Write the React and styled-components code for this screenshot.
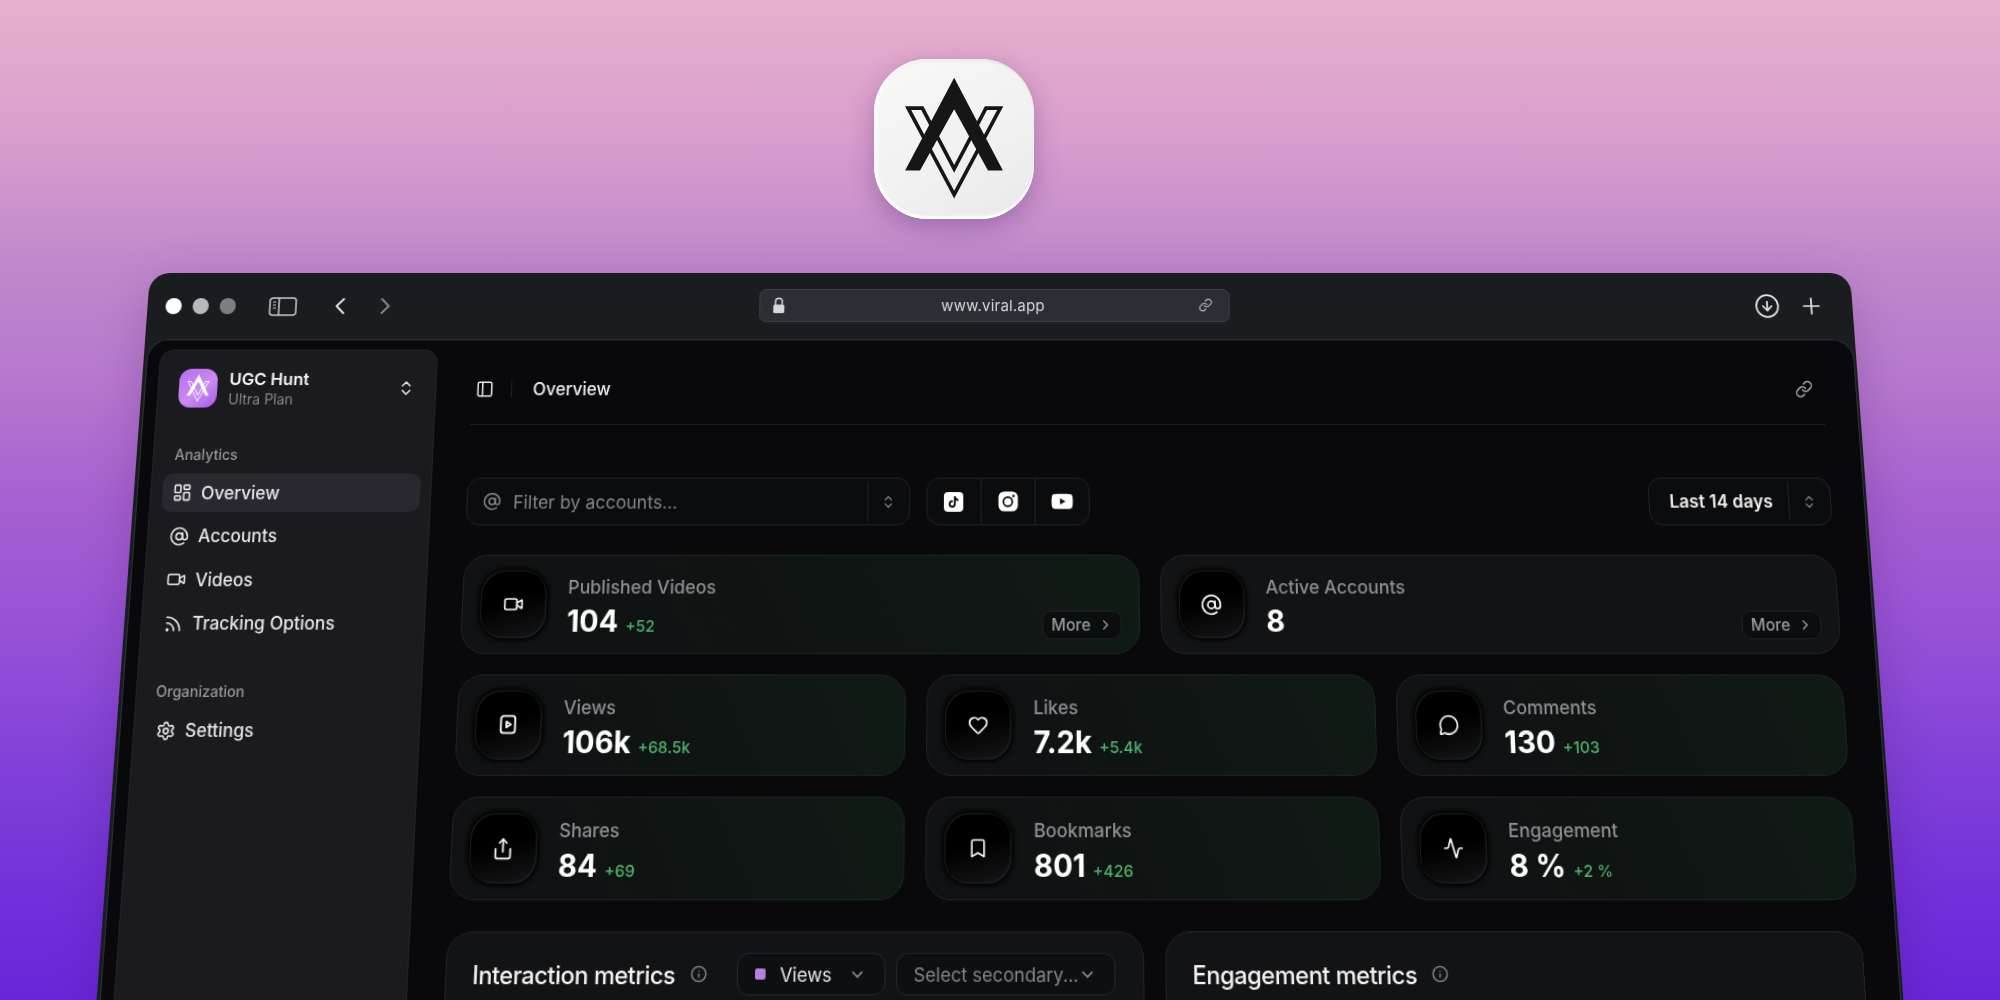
import styled, { createGlobalStyle } from "styled-components";
import {
    Activity, AtSign, Bookmark, ChevronDown, ChevronLeft, ChevronRight, ChevronsUpDown, CircleArrowDown, Heart,
    Info, LayoutDashboard, Link, MessageCircle, PanelLeft, Plus, Rss, Settings, Share, Video,
} from "lucide-react";
import { FaTiktok, FaYoutube } from "react-icons/fa";

// the window leans back: its top edge is 1700px wide and it widens towards the bottom of the page
const WINDOW_WIDTH = 1700;
const LEAN = 8.64e-5;
const tilt = `matrix3d(1,0,0,0, ${-(WINDOW_WIDTH / 2) * LEAN},1,0,${-LEAN}, 0,0,1,0, 0,0,0,1)`;

const topStats = [
    { icon: <Video size={20} />, label: "Published Videos", value: "104", delta: "+52", tint: true },
    { icon: <AtSign size={21} />, label: "Active Accounts", value: "8" },
];

const gridStats = [
    { icon: <ViewsIcon />, label: "Views", value: "106k", delta: "+68.5k", tint: true },
    { icon: <Heart size={20} />, label: "Likes", value: "7.2k", delta: "+5.4k", tint: true },
    { icon: <MessageCircle size={20} />, label: "Comments", value: "130", delta: "+103", tint: true },
    { icon: <Share size={21} />, label: "Shares", value: "84", delta: "+69", tint: true },
    { icon: <Bookmark size={20} />, label: "Bookmarks", value: "801", delta: "+426", tint: true },
    { icon: <Activity size={20} />, label: "Engagement", value: "8 %", delta: "+2 %", tint: true },
];

function ViewsIcon() {
    return (
        <svg width="21" height="21" viewBox="0 0 20 20" fill="none" stroke="currentColor" strokeWidth="1.8" strokeLinejoin="round">
            <rect x="3.5" y="2.5" width="13" height="15" rx="2.5" />
            <path d="M8.5 7.5 L12.5 10 L8.5 12.5 Z" />
        </svg>
    );
}

function SafariSidebarIcon() {
    return (
        <svg width="28" height="19" viewBox="0 0 28 19" fill="none" stroke="#c9cbcd" strokeWidth="1.5">
            <rect x="1" y="1" width="26" height="17" rx="3" />
            <path d="M10 1 V18" />
            <path d="M4 5 H7 M4 8 H7 M4 11 H7" strokeWidth="1.2" />
        </svg>
    );
}

function LockIcon() {
    return (
        <svg width="13" height="17" viewBox="0 0 13 17">
            <path d="M3.2 8 V4.6 a3.3 3.3 0 0 1 6.6 0 V8" fill="none" stroke="#d8d9da" strokeWidth="1.5" />
            <rect x="1" y="7.5" width="11" height="8.5" rx="1.6" fill="#d8d9da" />
        </svg>
    );
}

function InstagramTile() {
    return (
        <svg width="20" height="20" viewBox="0 0 20 20">
            <rect x="0.5" y="0.5" width="19" height="19" rx="5.5" fill="#ffffff" />
            <circle cx="9.7" cy="10.3" r="4.4" fill="none" stroke="#0a0b0d" strokeWidth="1.7" />
            <circle cx="15.2" cy="4.8" r="1.2" fill="#0a0b0d" />
        </svg>
    );
}

function Mark({ color }) {
    return (
        <svg viewBox="245 135 315 380" width="100%" height="100%">
            <path
                d="M264 235 L403 496 L542 235 L499 235 L403 418 L307 235 Z"
                fill="none"
                stroke={color}
                strokeWidth="11"
                strokeLinejoin="miter"
            />
            <path d="M403 143 L550 423 L505 423 L403 238 L300 423 L255 423 Z" fill={color} />
        </svg>
    );
}

function StatCard({ icon, label, value, delta, tint, more }) {
    return (
        <Card $tint={tint}>
            <Tile>{icon}</Tile>
            <StatText>
                <StatLabel>{label}</StatLabel>
                <StatLine>
                    <StatValue>{value}</StatValue>
                    {delta && <StatDelta>{delta}</StatDelta>}
                </StatLine>
            </StatText>
            {more && <MoreButton>More <ChevronRight size={15} /></MoreButton>}
        </Card>
    );
}

export default function App() {
    return (
        <Page>
            <GlobalStyle />
            <AppIcon><Mark color="#161616" /></AppIcon>
            <BrowserWindow>
                <Toolbar>
                    <ToolbarLeft>
                        <Dot $shade="#ffffff" />
                        <Dot $shade="#b9bbbb" />
                        <Dot $shade="#7d7f80" />
                        <SidebarToggle><SafariSidebarIcon /></SidebarToggle>
                        <NavButton><ChevronLeft size={28} strokeWidth={1.7} color="#e4e5e6" /></NavButton>
                        <NavButton><ChevronRight size={28} strokeWidth={1.7} color="#85888a" /></NavButton>
                    </ToolbarLeft>
                    <UrlBar>
                        <LockIcon />
                        <UrlText>www.viral.app</UrlText>
                        <Link size={14} color="#b4b6b8" />
                    </UrlBar>
                    <ToolbarRight>
                        <CircleArrowDown size={26} strokeWidth={1.6} color="#e4e5e6" />
                        <Plus size={26} strokeWidth={1.6} color="#e4e5e6" />
                    </ToolbarRight>
                </Toolbar>
                <Panel>
                    <Sidebar>
                        <Workspace>
                            <WorkspaceLogo><Mark color="#ffffff" /></WorkspaceLogo>
                            <WorkspaceText>
                                <WorkspaceName>UGC Hunt</WorkspaceName>
                                <WorkspacePlan>Ultra Plan</WorkspacePlan>
                            </WorkspaceText>
                            <ChevronsUpDown size={18} color="#e4e5e6" />
                        </Workspace>
                        <SectionLabel>Analytics</SectionLabel>
                        <NavItem $active><LayoutDashboard size={19} />Overview</NavItem>
                        <NavItem><AtSign size={19} />Accounts</NavItem>
                        <NavItem><Video size={19} />Videos</NavItem>
                        <NavItem><Rss size={19} />Tracking Options</NavItem>
                        <SectionLabel $lower>Organization</SectionLabel>
                        <NavItem><Settings size={19} />Settings</NavItem>
                    </Sidebar>
                    <Main>
                        <Header>
                            <PanelLeft size={18} color="#e4e5e6" />
                            <HeaderDivider />
                            <HeaderTitle>Overview</HeaderTitle>
                            <HeaderLink><Link size={18} color="#9b9da0" /></HeaderLink>
                        </Header>
                        <Filters>
                            <AccountFilter>
                                <AccountInput><AtSign size={18} color="#85878a" />Filter by accounts...</AccountInput>
                                <SelectArrows><ChevronsUpDown size={15} color="#85878a" /></SelectArrows>
                            </AccountFilter>
                            <SocialGroup>
                                <SocialCell><GlyphTile><FaTiktok size={11} color="#0a0b0d" /></GlyphTile></SocialCell>
                                <SocialCell><InstagramTile /></SocialCell>
                                <SocialCell><FaYoutube size={22} color="#ffffff" /></SocialCell>
                            </SocialGroup>
                            <RangeSelect>
                                <RangeLabel>Last 14 days</RangeLabel>
                                <SelectArrows><ChevronsUpDown size={15} color="#85878a" /></SelectArrows>
                            </RangeSelect>
                        </Filters>
                        <TopStats>
                            {topStats.map((stat) => <StatCard key={stat.label} {...stat} more />)}
                        </TopStats>
                        <GridStats>
                            {gridStats.map((stat) => <StatCard key={stat.label} {...stat} />)}
                        </GridStats>
                        <Charts>
                            <ChartCard>
                                <ChartHead>
                                    <ChartTitle>Interaction metrics</ChartTitle>
                                    <Info size={16} color="#85878a" />
                                    <Selects>
                                        <MetricSelect $width={140} $gap={14}>
                                            <Swatch />
                                            <SelectText>Views</SelectText>
                                            <ChevronDown size={17} color="#85878a" />
                                        </MetricSelect>
                                        <MetricSelect $width={207} $gap={0}>
                                            <SelectText $muted>Select secondary...</SelectText>
                                            <ChevronDown size={17} color="#85878a" />
                                        </MetricSelect>
                                    </Selects>
                                </ChartHead>
                            </ChartCard>
                            <ChartCard>
                                <ChartHead>
                                    <ChartTitle>Engagement metrics</ChartTitle>
                                    <Info size={16} color="#85878a" />
                                </ChartHead>
                            </ChartCard>
                        </Charts>
                    </Main>
                </Panel>
            </BrowserWindow>
        </Page>
    );
}

const GlobalStyle = createGlobalStyle`
* { box-sizing: border-box; }
body {
    margin: 0;
    font-family: Inter, "Liberation Sans", sans-serif;
    background: #6a25da;
}
`
const Page = styled.div`
width: 2000px;
height: 1000px;
overflow: hidden;
display: flex;
flex-direction: column;
align-items: center;
padding-top: 59px;
background: linear-gradient(180deg, #e6b0cc 0%, #da9fcd 13%, #c18acb 25.5%, #b678cf 38%, #a55fd1 51%, #9550d6 64%, #8240d8 76.5%, #7330da 89%, #6a25da 100%);
`
const AppIcon = styled.div`
width: 160px;
height: 160px;
flex: none;
margin-right: 92px;
display: flex;
align-items: center;
justify-content: center;
padding: 16px 0 18px;
border-radius: 54px;
background: linear-gradient(150deg, #f8f8f8 0%, #f1f1f1 55%, #e9e9e9 100%);
box-shadow: inset 0 -3px 2px #ffffff, inset 3px 0 3px #ffffff, inset 0 2px 2px #e4e4e4, 0 8px 26px rgba(70, 30, 110, 0.32);
`
const BrowserWindow = styled.div`
width: ${WINDOW_WIDTH}px;
height: 900px;
flex: none;
margin-top: 54px;
border-radius: 20px 20px 0 0;
background: #1a1d20;
box-shadow: 0 10px 50px rgba(50, 10, 70, 0.2);
transform-origin: 0 0;
transform: ${tilt};
`
const Toolbar = styled.div`
height: 66px;
display: grid;
grid-template-columns: 592px 469px 1fr;
align-items: center;
padding: 0 17.5px;
`
const ToolbarLeft = styled.div`
display: flex;
align-items: center;
gap: 11px;
`
const Dot = styled.span`
width: 16px;
height: 16px;
border-radius: 50%;
background: ${props => props.$shade};
`
const SidebarToggle = styled.div`
display: flex;
margin: 0 18px 0 22px;
`
const NavButton = styled.div`
display: flex;
margin-right: 6px;
`
const UrlBar = styled.div`
height: 33px;
margin-top: -2px;
display: flex;
align-items: center;
justify-content: space-between;
padding: 0 16px 0 12px;
border-radius: 7px;
background: #2b2e32;
border: 1px solid #3b3e42;
`
const UrlText = styled.span`
margin-left: 3px;
font-size: 15px;
letter-spacing: 0.2px;
color: #d6d7d9;
`
const ToolbarRight = styled.div`
display: flex;
justify-content: flex-end;
align-items: center;
gap: 18px;
padding-right: 11px;
`
const Panel = styled.div`
height: 834px;
margin: 0 2.5px;
display: flex;
padding: 9px 0 0 12px;
border-radius: 20px 20px 0 0;
border: 1px solid #2d3134;
border-bottom: none;
background: #09090b;
`
const Sidebar = styled.aside`
width: 276px;
flex: none;
padding: 17px 10px 0 11px;
border-radius: 14px 14px 0 0;
background: #1a1a1f;
border: 1px solid #222327;
border-bottom: none;
`
const Workspace = styled.div`
display: flex;
align-items: center;
padding: 0 10px 0 9px;
`
const WorkspaceLogo = styled.div`
width: 38px;
height: 38px;
flex: none;
padding: 5px;
border-radius: 12px;
background: linear-gradient(140deg, #b46ef0 0%, #c98bf0 55%, #a45ee8 100%);
`
const WorkspaceText = styled.div`
flex: 1;
margin-left: 12px;
`
const WorkspaceName = styled.div`
font-size: 16.5px;
line-height: 22px;
font-weight: 600;
color: #f2f2f3;
`
const WorkspacePlan = styled.div`
font-size: 14px;
line-height: 18px;
color: #85868b;
`
const SectionLabel = styled.div`
font-size: 14px;
line-height: 20px;
font-weight: 500;
color: #96979b;
padding-left: ${props => props.$lower ? "8px" : "10px"};
margin: 35px 0 8px;
`
const NavItem = styled.div`
height: 37px;
display: flex;
align-items: center;
gap: 9.5px;
padding-left: 10px;
margin-bottom: 4.6px;
border-radius: 10px;
font-size: 17px;
font-weight: 500;
color: #e6e6e8;
background: ${props => props.$active ? "#28282e" : "transparent"};
`
const Main = styled.main`
flex: 1;
min-width: 0;
padding: 4px 32px 0 35px;
`
const Header = styled.header`
height: 70px;
display: flex;
align-items: center;
margin-bottom: 51px;
padding-left: 4px;
border-bottom: 1px solid #1d1f22;
`
const HeaderDivider = styled.span`
width: 1px;
height: 18px;
margin: 0 21px 0 17px;
background: #1f2124;
`
const HeaderTitle = styled.span`
font-size: 17px;
font-weight: 500;
color: #ececee;
`
const HeaderLink = styled.span`
display: flex;
margin-left: auto;
margin-right: 10px;
`
const Filters = styled.div`
display: flex;
gap: 16px;
height: 46px;
margin-bottom: 28px;
`
const ControlBox = styled.div`
display: flex;
align-items: stretch;
height: 46px;
border-radius: 13px;
border: 1px solid #202225;
background: #0b0c0e;
`
const AccountFilter = styled(ControlBox)`
width: 435px;
`
const AccountInput = styled.div`
flex: 1;
display: flex;
align-items: center;
gap: 12px;
padding-left: 15px;
font-size: 17.4px;
color: #85878a;
`
const SelectArrows = styled.div`
width: 41px;
display: flex;
align-items: center;
justify-content: center;
border-left: 1px solid #202225;
margin: 3px 0;
`
const SocialGroup = styled(ControlBox)`
width: 160px;
`
const SocialCell = styled.div`
flex: 1;
display: flex;
align-items: center;
justify-content: center;
& + & { border-left: 1px solid #202225; }
`
const GlyphTile = styled.span`
width: 19px;
height: 19px;
display: flex;
align-items: center;
justify-content: center;
border-radius: 4px;
background: #ffffff;
`
const RangeSelect = styled(ControlBox)`
margin-left: auto;
width: 179px;
`
const RangeLabel = styled.div`
flex: 1;
display: flex;
align-items: center;
padding-left: 20px;
font-size: 17px;
font-weight: 600;
color: #eeeeef;
`
const TopStats = styled.div`
display: grid;
grid-template-columns: 1fr 1fr;
gap: 20px;
margin-bottom: 18.5px;
`
const GridStats = styled.div`
display: grid;
grid-template-columns: repeat(3, 1fr);
column-gap: 20px;
row-gap: 19.5px;
margin-bottom: 28px;
`
const Card = styled.div`
height: 94px;
display: flex;
padding: 0 17px 0 17px;
border-radius: 24px;
border: 1px solid #1f2225;
background: ${props => props.$tint
        ? "linear-gradient(65deg, #101113 0%, #0f1513 55%, #101b15 100%)"
        : "#121315"};
`
const Tile = styled.div`
width: 64px;
height: 64px;
flex: none;
align-self: center;
display: flex;
align-items: center;
justify-content: center;
border-radius: 23px;
color: #f4f4f5;
background: linear-gradient(165deg, #000000 45%, #151618 100%);
box-shadow: inset 1px 1px 1px #1c1d1f, inset -1px -1px 2px #222326, 0 0 4px 2px #000000;
`
const StatText = styled.div`
padding: 19px 0 0 21px;
`
const StatLabel = styled.div`
font-size: 17.4px;
line-height: 22px;
font-weight: 500;
color: #8e8f93;
`
const StatLine = styled.div`
display: flex;
align-items: baseline;
gap: 7px;
margin-top: 4px;
`
const StatValue = styled.span`
font-size: 28px;
line-height: 34px;
font-weight: 700;
color: #ffffff;
`
const StatDelta = styled.span`
font-size: 15px;
font-weight: 500;
color: #4fb26c;
`
const MoreButton = styled.div`
height: 27px;
width: 77px;
align-self: flex-end;
margin: 0 0 13px auto;
display: flex;
align-items: center;
justify-content: center;
gap: 7px;
padding-left: 2px;
border-radius: 9px;
border: 1px solid #1f2124;
background: #0c0d0f;
font-size: 15.5px;
font-weight: 500;
color: #9a9b9f;
`
const Charts = styled.div`
display: grid;
grid-template-columns: 1fr 1fr;
gap: 20px;
`
const ChartCard = styled.div`
height: 280px;
padding: 18px 26px 0 25px;
border-radius: 24px;
border: 1px solid #1f2225;
background: #121315;
`
const ChartHead = styled.div`
display: flex;
align-items: center;
gap: 14px;
height: 38px;
`
const ChartTitle = styled.h2`
margin: 0;
font-size: 22.2px;
font-weight: 500;
letter-spacing: -0.4px;
color: #f2f2f3;
`
const Selects = styled.div`
display: flex;
gap: 10px;
margin-left: auto;
`
const MetricSelect = styled.div`
width: ${props => props.$width}px;
height: 38px;
display: flex;
align-items: center;
gap: ${props => props.$gap}px;
padding: 0 17px 0 16px;
border-radius: 11px;
border: 1px solid #232529;
background: #0e0f11;
svg { flex: none; }
`
const Swatch = styled.span`
width: 10px;
height: 10px;
border-radius: 2px;
background: #b481e0;
`
const SelectText = styled.span`
flex: 1;
white-space: nowrap;
font-size: 17.2px;
color: ${props => props.$muted ? "#85878a" : "#e9e9eb"};
`
